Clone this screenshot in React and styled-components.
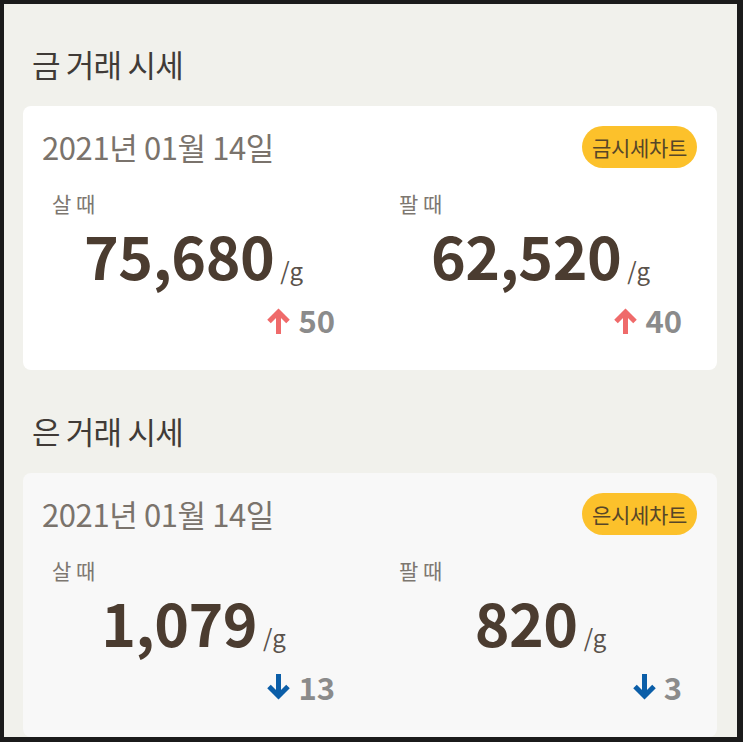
import styled, { createGlobalStyle } from "styled-components";

const GlobalStyle = createGlobalStyle`
  html, body {
    margin: 0;
    padding: 0;
    background: #1b1b1b;
  }
  * {
    box-sizing: border-box;
  }
`;

const Screen = styled.div`
  margin: 4px 6px 0 4px;
  height: 733px;
  overflow: hidden;
  background: #f1f1ec;
  padding: 38px 20px 0 19px;
  font-family: "Noto Sans CJK KR", "Noto Sans", sans-serif;
`;

const Section = styled.section`
  & + & {
    margin-top: 39px;
  }
`;

const SectionTitle = styled.h2`
  margin: 0 0 20px 9px;
  font-size: 31px;
  line-height: 44px;
  font-weight: 400;
  color: #403b37;
  letter-spacing: -0.8px;
`;

const Card = styled.div`
  background: ${(p) => (p.$muted ? "#f8f8f8" : "#ffffff")};
  border-radius: 8px;
  padding: 20px 0 30px;
`;

const CardHeader = styled.div`
  display: flex;
  align-items: center;
  justify-content: space-between;
  padding: 0 20px 0 19px;
`;

const DateText = styled.div`
  font-size: 31px;
  line-height: 42px;
  color: #7a736c;
  letter-spacing: -0.4px;
`;

const ChartButton = styled.button`
  height: 42px;
  padding: 0 10px;
  border: none;
  border-radius: 21px;
  background: #fcc12b;
  color: #574628;
  font-family: inherit;
  font-size: 21px;
  letter-spacing: -0.3px;
  cursor: pointer;
`;

const PriceGrid = styled.div`
  display: grid;
  grid-template-columns: 1fr 1fr;
  margin-top: 20px;
`;

const PriceCol = styled.div`
  display: flex;
  flex-direction: column;
`;

const Label = styled.div`
  padding-left: 29px;
  font-size: 21px;
  line-height: 30px;
  color: #7d7770;
`;

const PriceLine = styled.div`
  text-align: center;
  padding-right: 6px;
  font-size: 59px;
  line-height: 74px;
  height: 74px;
`;

const Price = styled.span`
  font-weight: 700;
  color: #4b3c30;
  letter-spacing: -0.5px;
`;

const Unit = styled.span`
  margin-left: 6px;
  font-size: 24px;
  line-height: 1;
  color: #5a524b;
`;

const Change = styled.div`
  display: flex;
  align-items: center;
  justify-content: flex-end;
  gap: 7px;
  height: 40px;
  padding-right: 35px;
  margin-top: 8px;
  font-size: 31px;
  line-height: 40px;
  font-weight: 700;
  color: #8b8b8b;
`;

const Arrow = ({ up }) => (
  <svg width="25" height="27" viewBox="0 0 25 27" aria-hidden="true">
    <g
      fill="none"
      stroke={up ? "#ef6a6a" : "#0b5ea8"}
      strokeWidth="5"
      strokeLinejoin="miter"
      transform={up ? undefined : "rotate(180 12.5 13.5)"}
    >
      <path d="M12.5 27V6" />
      <path d="M3 14.5L12.5 5l9.5 9.5" />
    </g>
  </svg>
);

const data = [
  {
    title: "금 거래 시세",
    chart: "금시세차트",
    muted: false,
    buy: { price: "75,680", diff: "50", up: true },
    sell: { price: "62,520", diff: "40", up: true },
  },
  {
    title: "은 거래 시세",
    chart: "은시세차트",
    muted: true,
    buy: { price: "1,079", diff: "13", up: false },
    sell: { price: "820", diff: "3", up: false },
  },
];

const PriceBlock = ({ label, item }) => (
  <PriceCol>
    <Label>{label}</Label>
    <PriceLine>
      <Price>{item.price}</Price>
      <Unit>/g</Unit>
    </PriceLine>
    <Change>
      <Arrow up={item.up} />
      <span>{item.diff}</span>
    </Change>
  </PriceCol>
);

const App = () => {
  return (
    <>
      <GlobalStyle />
      <Screen>
        {data.map((d) => (
          <Section key={d.title}>
            <SectionTitle>{d.title}</SectionTitle>
            <Card $muted={d.muted}>
              <CardHeader>
                <DateText>2021년 01월 14일</DateText>
                <ChartButton>{d.chart}</ChartButton>
              </CardHeader>
              <PriceGrid>
                <PriceBlock label="살 때" item={d.buy} />
                <PriceBlock label="팔 때" item={d.sell} />
              </PriceGrid>
            </Card>
          </Section>
        ))}
      </Screen>
    </>
  );
};

export default App;
